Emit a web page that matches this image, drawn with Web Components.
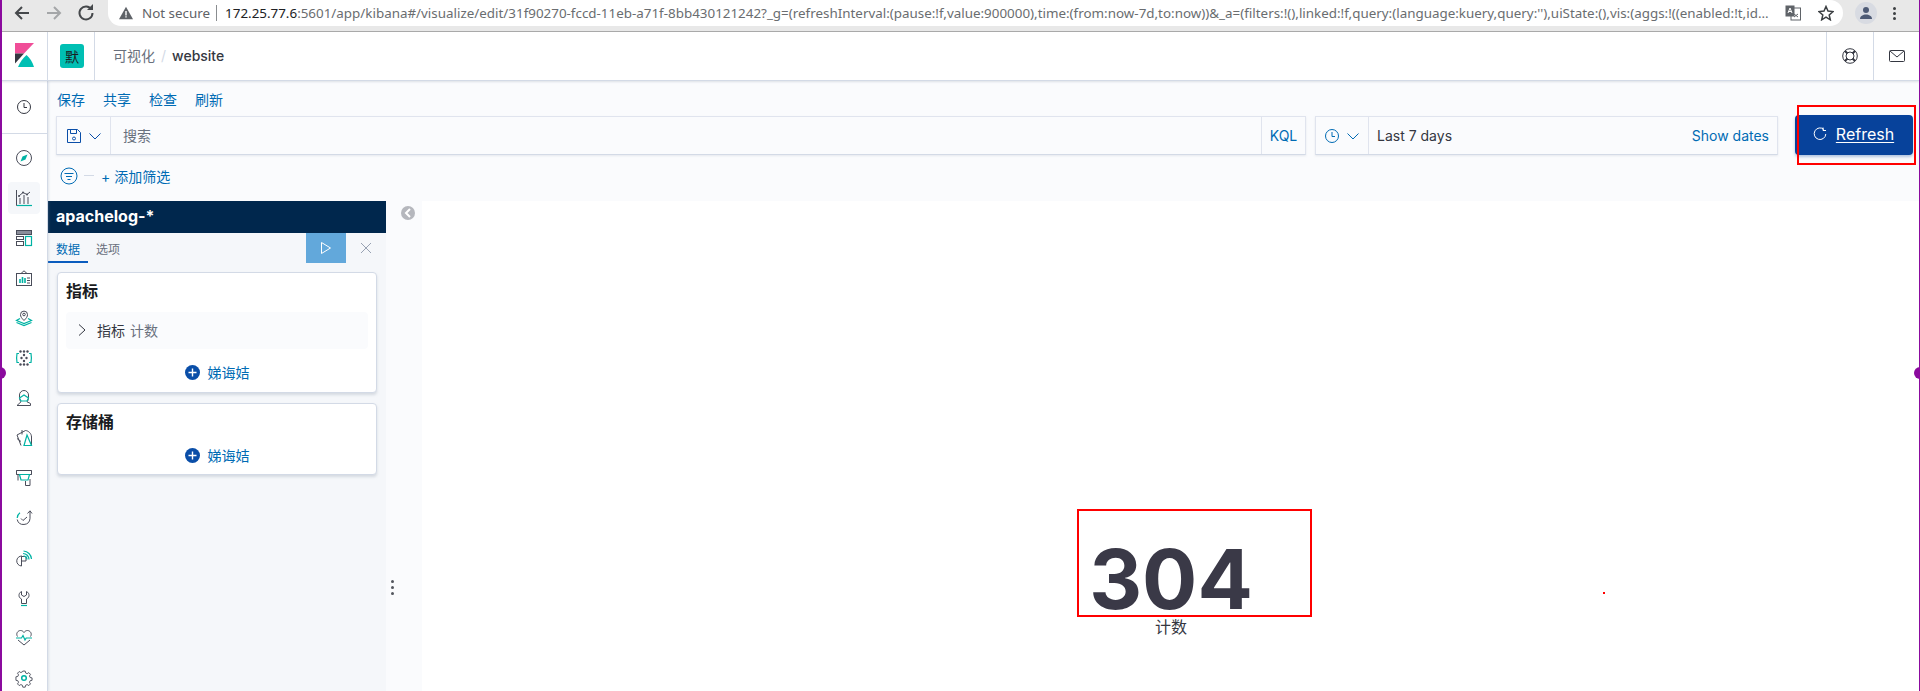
<!DOCTYPE html>
<html lang="zh">
<head>
<meta charset="utf-8">
<title>website - Kibana</title>
<style>
  html, body { margin: 0; padding: 0; height: 100%; overflow: hidden; background: #fff; }
  body { font-family: Inter, "Noto Sans CJK SC", sans-serif; color: #343741; }
</style>
</head>
<body>
<kbn-app></kbn-app>
<script>
const CJK = 'Inter, "Noto Sans CJK SC", sans-serif';
const D = 'fill="none" stroke="#4a4d5a" stroke-width="1"';
const T = 'fill="none" stroke="#00b3a4" stroke-width="1.2"';

const NAV_ICONS = {
  clock: `<circle cx="8" cy="8" r="6.5" fill="none" stroke="#343741"/><path d="M8 4v4.5h3" fill="none" stroke="#343741"/>`,
  discover: `<circle cx="8" cy="8" r="7.5" ${D}/><path d="M11.5 4.5 9.5 9.5 4.5 11.5 6.5 6.5z" fill="#00b3a4"/>`,
  visualize: `<path d="M.5 0v15.5H16" ${D}/><path d="M1 15.5h15" ${T}/><path d="M3 6 7 2.5 11 4.5 14 2" ${D}/><path d="M4 8v6M8 5v9M12 7v7" ${D}/><circle cx="3" cy="6" r="1" fill="#4a4d5a"/><circle cx="7" cy="2.5" r="1" fill="#4a4d5a"/><circle cx="11" cy="4.5" r="1" fill="#4a4d5a"/>`,
  dashboard: `<rect x=".5" y=".5" width="15" height="4" fill="#8a8d99" stroke="#4a4d5a"/><rect x=".5" y="6.5" width="7" height="3" ${D}/><rect x=".5" y="11.5" width="7" height="4" ${D}/><rect x="9.5" y="6.5" width="6" height="9" ${T}/>`,
  canvas: `<rect x=".5" y="3.5" width="15" height="12" ${D}/><path d="M5 3.5 8 .8l3 2.7" ${D}/><path d="M4 13V9M6.5 13V7M9 13V8" stroke="#00b3a4" stroke-width="1.6"/><path d="M11 8h3M11 10.5h3M11 13h3" ${D}/>`,
  maps: `<path d="M8 10.5C5.5 8 4.5 6.6 4.5 4.6a3.5 3.5 0 0 1 7 0C11.500 6.600 10.500 8 8 10.500z" ${D}/><circle cx="8" cy="4.500" r="1.300" ${D}/><path d="M4 8.500.5 10.500 8 13.500l7.500-3L12 8.500M.5 12.500 8 15.500l7.500-3" ${T}/>`,
  ml: `<g fill="#4a4d5a"><circle cx="4.500" cy="1.500" r="1.200"/><circle cx="8" cy="1.500" r="1.200"/><circle cx="11.500" cy="1.500" r="1.200"/><circle cx="5.500" cy="8" r="1.200"/><circle cx="10.500" cy="8" r="1.200"/><circle cx="8" cy="5" r="1.200"/><circle cx="8" cy="11" r="1.200"/><circle cx="4.500" cy="14.500" r="1.200"/><circle cx="8" cy="14.500" r="1.200"/><circle cx="11.500" cy="14.500" r="1.200"/></g><path d="M3 3.500H1L.6 8 1 12.500h2M13 3.500h2l.4 4.500-.4 4.500h-2" ${T}/>`,
  infra: `<path d="M1 15.500 5 11.800C3.800 10.500 3.500 9 3.500 7.500V5a4.500 4.500 0 0 1 9 0v2.500c0 1.500-.3 3-1.500 4.300l3.500 1.700v2H1z" ${D}/><path d="M3.500 8 8 5l4.500 3L11 11H5z" ${T}/>`,
  logs: `<path d="M15.500 15.500V7C15.500 3.500 12.500.8 9.500.5L1 5l4 10.500" ${D}/><path d="M6 4.500V0M1 8.500l4 3" ${D}/><path d="M8 15.500 11 5l4.500 10.500z" ${T}/>`,
  apm: `<path d="M.5 .5h15v4H.5zM2 4.500v6M14 9v6.500H9.500V11" ${D}/><path d="M3.500 4.500h10L12 10H5z" ${T}/><path d="M.5 .5v4M15.500 .5v4" ${D}/>`,
  uptime: `<path d="M4 2.800A6.800 6.800 0 0 0 1.200 8" ${T}/><path d="M1.200 9.500a6.500 6.500 0 0 0 12.800-1V1M11.500 3.500 14 .8l2 2.700" ${D}/><path d="M5 8.500l2 2 4-3.500" ${D}/>`,
  siem: `<path d="M9 6.500H5.500V16A5 5 0 1 1 6 6M5.500 11H10V6.500" ${D}/><path d="M7 3.500a6 6 0 0 1 6 6M7.500 1a8.500 8.500 0 0 1 8 8M7.500 6a3.500 3.500 0 0 1 3.500 3.500" ${T}/>`,
  dev: `<path d="M5.500 1.500C3.500 2.500 3 4 3 5.500c0 2 1.500 3 2.500 3.500v4.500h5V9c1-.5 2.500-1.500 2.500-3.500 0-1.500-.5-3-2.500-4V5L8 6.500 5.500 5z" ${D}/><path d="M5 15.500h6" ${T}/>`,
  monitoring: `<path d="M8 15 2 10M14 10l-6 5M1.500 6.500C-.500 3.500 2 .5 4.500 .5 6 .5 7.200 1.300 8 2.500 8.800 1.300 10 .5 11.500 .5 14 .5 16.500 3.500 14.500 6.500" ${D}/><path d="M0 8h5.500l1.500-2.500 2 4.500 1.200-2H16" ${T}/>`,
  management: `<path d="M6.700.5h2.600l.4 2 1.700.8 1.800-1.100 1.800 1.800-1.100 1.800.8 1.700 2 .4v2.600l-2 .4-.8 1.700 1.100 1.800-1.800 1.800-1.800-1.100-1.700.8-.4 2H6.700l-.4-2-1.700-.8-1.800 1.100-1.800-1.800 1.100-1.800-.8-1.700-2-.4V6.700l2-.4.8-1.700-1.100-1.800 1.800-1.800 1.800 1.100 1.700-.8z" transform="translate(.6 .6) scale(.925)" ${D}/><circle cx="8" cy="8" r="2.300" fill="none" stroke="#00b3a4" stroke-width="1.500"/>`
};

class KbnNavIcon extends HTMLElement {
  connectedCallback() {
    const name = this.getAttribute("name");
    const root = this.attachShadow({ mode: "open" });
    root.innerHTML = `
      <style>
        :host { display: flex; align-items: center; justify-content: center; width: 32px; height: 32px; flex: none; border-radius: 4px; }
        :host([active]) { background: #f5f7fa; }
        svg { width: 16px; height: 16px; display: block; overflow: visible; }
      </style>
      <svg viewBox="0 0 16 16">${NAV_ICONS[name]}</svg>`;
  }
}
customElements.define("kbn-nav-icon", KbnNavIcon);

class KbnNav extends HTMLElement {
  constructor() {
    super();
    const names = ["discover", "visualize", "dashboard", "canvas", "maps", "ml", "infra", "logs", "apm", "uptime", "siem", "dev", "monitoring", "management"];
    this.attachShadow({ mode: "open" }).innerHTML = `
      <style>
        :host { display: block; width: 48px; box-sizing: border-box; flex: none; background: #fff; border-right: 1px solid #d3dae6; box-shadow: 1px 0 2px rgba(152,162,179,.25); z-index: 2; overflow: hidden; }
        .recent { height: 52px; border-bottom: 1px solid #d3dae6; display: flex; align-items: center; justify-content: center; padding-left: 1px; }
        .recent svg { width: 16px; height: 16px; }
        .list { padding: 8px 0 0 8px; display: flex; flex-direction: column; gap: 8px; }
      </style>
      <div class="recent"><svg viewBox="0 0 16 16">${NAV_ICONS.clock}</svg></div>
      <div class="list">
        ${names.map(n => `<kbn-nav-icon name="${n}"${n == "visualize" ? " active" : ""}></kbn-nav-icon>`).join("")}
      </div>`;
  }
}
customElements.define("kbn-nav", KbnNav);

class BrowserBar extends HTMLElement {
  constructor() {
    super();
    this.attachShadow({ mode: "open" }).innerHTML = `
      <style>
        :host { display: flex; height: 31px; flex: none; background: #e8e8e8; border-bottom: 1px solid #a9a9a9; font: 13.400px "Noto Sans", sans-serif; color: #5f6368; }
        .nav { display: flex; width: 108px; flex: none; padding: 0 0 5px 13px; box-sizing: border-box; align-items: center; gap: 14px; }
        .nav svg { width: 18px; height: 18px; flex: none; }
        .omni { width: 1735px; flex: none; height: 26px; background: #fff; border-radius: 0 13px 13px 13px; display: flex; align-items: center; padding: 0 9px 0 11px; box-sizing: border-box; white-space: nowrap; }
        .warn { width: 14px; height: 14px; flex: none; margin-right: 9px; }
        .sep { width: 1px; height: 16px; background: #8a8d90; margin: 0 8px 0 6px; flex: none; }
        .url { flex: 1; min-width: 0; color: #6a6d70; }
        .url b { font-weight: 400; color: #202124; }
        .tr { margin-left: 15px; width: 16px; height: 16px; flex: none; }
        .star { margin-left: 17px; width: 16px; height: 16px; flex: none; }
        .right { flex: 1; display: flex; align-items: center; padding-bottom: 5px; }
        .avatar { width: 22px; height: 22px; border-radius: 50%; background: #d8dbe2; margin-left: 12px; display: flex; align-items: center; justify-content: center; }
        .kebab { margin-left: 16px; display: flex; flex-direction: column; gap: 2px; }
        .kebab i { width: 3px; height: 3px; border-radius: 50%; background: #3c4043; display: block; }
      </style>
      <div class="nav">
        <svg viewBox="0 0 18 18"><path d="M16 9H3.500M9 3 3 9l6 6" fill="none" stroke="#45484b" stroke-width="2"/></svg>
        <svg viewBox="0 0 18 18"><path d="M2 9h12.500M9 3l6 6-6 6" fill="none" stroke="#a4a6a8" stroke-width="2"/></svg>
        <svg viewBox="0 0 18 18"><path d="M14.500 5.500A6.500 6.500 0 1 0 15.500 9" fill="none" stroke="#45484b" stroke-width="2"/><path d="M10 6h6V0z" fill="#45484b"/></svg>
      </div>
      <div class="omni">
        <svg class="warn" viewBox="0 0 14 14"><path d="M7 .8 14 13.200H0z" fill="#5f6368"/><path d="M6.300 5h1.400v4.400H6.300zM6.300 10.200h1.400v1.400H6.300z" fill="#fff"/></svg>
        <span class="sec">Not secure</span><span class="sep"></span>
        <span class="url"><b>172.25.77.6</b>:5601/app/kibana#/visualize/edit/31f90270-fccd-11eb-a71f-8bb430121242?_g=(refreshInterval:(pause:!f,value:900000),time:(from:now-7d,to:now))&amp;_a=(filters:!(),linked:!f,query:(language:kuery,query:''),uiState:(),vis:(aggs:!((enabled:!t,id...</span>
        <svg class="tr" viewBox="0 0 16 16"><rect x="6" y="3" width="9.500" height="12" fill="#fff" stroke="#5f6368"/><rect x=".5" y=".5" width="9" height="11" fill="#5f6368"/><path d="M3 8l2-5 2 5M3.800 6.500h2.400" fill="none" stroke="#fff"/><path d="M9 9l4 3M13 9l-4 3" stroke="#5f6368"/></svg>
        <svg class="star" viewBox="0 0 16 16"><path d="M8 1.500l2 4.600 5 .5-3.800 3.300 1.100 4.900L8 12.200l-4.300 2.600 1.100-4.900L1 6.600l5-.5z" fill="none" stroke="#3c4043" stroke-width="1.500"/></svg>
      </div>
      <div class="right">
        <span class="avatar"><svg width="14" height="14" viewBox="0 0 14 14"><circle cx="7" cy="4" r="3" fill="#4d5a75"/><path d="M1 13c0-3 3-4.500 6-4.500s6 1.500 6 4.500z" fill="#4d5a75"/></svg></span>
        <span class="kebab"><i></i><i></i><i></i></span>
      </div>`;
  }
}
customElements.define("browser-bar", BrowserBar);

class KbnHeader extends HTMLElement {
  constructor() {
    super();
    this.attachShadow({ mode: "open" }).innerHTML = `
      <style>
        :host { display: flex; align-items: stretch; height: 48px; flex: none; background: #fff; border-bottom: 1px solid #d3dae6; box-shadow: 0 2px 2px -1px rgba(152,162,179,.3); z-index: 3; font-family: ${CJK}; }
        .logo { width: 48px; flex: none; display: flex; padding: 11px 0 0 15px; box-sizing: border-box; border-right: 1px solid #d3dae6; }
        .space { width: 47px; flex: none; border-right: 1px solid #d3dae6; padding: 12px 0 0 12px; box-sizing: border-box; }
        .badge { width: 24px; height: 24px; border-radius: 3px; background: #00bfb3; color: #1a1c21; font-size: 14px; display: flex; align-items: center; justify-content: center; }
        .crumbs { flex: 1; display: flex; align-items: center; padding: 0 0 2px 18px; font-size: 14px; color: #69707d; }
        .crumbs i { font-style: normal; color: #d3dae6; margin: 0 6px; }
        .crumbs b { font-weight: 500; color: #343741; }
        .act { width: 47px; flex: none; border-left: 1px solid #d3dae6; display: flex; justify-content: center; padding-top: 16px; box-sizing: border-box; }
        .act svg { width: 16px; height: 16px; }
      </style>
      <div class="logo"><svg width="19" height="24" viewBox="0 0 19 24"><path d="M0 0h19L9 10.500H0z" fill="#f04e98"/><path d="M0 10.500h9L0 20.500z" fill="#343741"/><path d="M3 24C5 19 8 15 11.500 12 15 15 17.500 19 19 24z" fill="#00bfb3"/></svg></div>
      <div class="space"><span class="badge">默</span></div>
      <div class="crumbs"><span>可视化</span><i>/</i><b>website</b></div>
      <div class="act"><svg viewBox="0 0 16 16"><circle cx="8" cy="8" r="7.300" fill="none" stroke="#343741"/><circle cx="8" cy="8" r="4" fill="none" stroke="#343741"/><path d="M3 3l2.500 2.500M13 3l-2.500 2.500M3 13l2.500-2.500M13 13l-2.500-2.500" stroke="#343741" stroke-width="2"/></svg></div>
      <div class="act"><svg viewBox="0 0 16 16"><rect x=".5" y="2.500" width="15" height="11" rx="1" fill="none" stroke="#343741"/><path d="M1 3l7 6 7-6" fill="none" stroke="#343741"/></svg></div>`;
  }
}
customElements.define("kbn-header", KbnHeader);

class KbnQueryBar extends HTMLElement {
  constructor() {
    super();
    this.attachShadow({ mode: "open" }).innerHTML = `
      <style>
        :host { display: block; flex: none; height: 120px; box-sizing: border-box; background: #fafbfd; font: 14px ${CJK}; color: #343741; }
        .links { height: 34px; display: flex; gap: 18px; padding-left: 9px; align-items: flex-end; color: #006bb4; }
        .links span { line-height: 28px; display: block; margin-bottom: 1px; }
        .row { display: flex; height: 40px; padding-left: 8px; align-items: flex-start; }
        .box { display: flex; height: 39px; margin-top: 1px; padding-bottom: 1px; box-sizing: border-box; border: 1px solid #e0e4ee; border-bottom-color: #d3dae6; box-shadow: 0 1px 2px rgba(152,162,179,.2); background: #fafbfd; align-items: center; }
        .query { width: 1250px; }
        .date { width: 463px; margin-left: 9px; }
        .pre { display: flex; align-items: center; justify-content: center; gap: 6px; height: 37px; margin-bottom: -1px; border-right: 1px solid #e0e4ee; box-sizing: border-box; flex: none; }
        .query .pre { width: 54px; }
        .date .pre { width: 53px; }
        .grow { flex: 1; padding-left: 12px; }
        .ph { color: #69707d; }
        .kql { width: 44px; flex: none; height: 37px; margin-bottom: -1px; padding-bottom: 1px; border-left: 1px solid #e0e4ee; display: flex; align-items: center; justify-content: center; color: #006bb4; box-sizing: border-box; }
        .link { color: #006bb4; padding-right: 8px; }
        .chev { width: 14px; height: 14px; }
        .btn { width: 118px; height: 40px; margin-left: 16.500px; padding-bottom: 2px; box-sizing: border-box; border-radius: 4px; background: #07429b; color: #fff; display: flex; align-items: center; justify-content: center; gap: 9px; box-shadow: 0 2px 3px rgba(7,66,155,.3); font-size: 16px; }
        .btn u { text-underline-offset: 2px; }
        .filter { display: flex; align-items: center; height: 46px; padding: 0 0 5px 11px; box-sizing: border-box; color: #006bb4; }
        .dash { width: 10px; height: 1px; background: #d3dae6; margin: 0 7px 0 6px; }
      </style>
      <div class="links"><span>保存</span><span>共享</span><span>检查</span><span>刷新</span></div>
      <div class="row">
        <div class="box query">
          <div class="pre">
            <svg width="16" height="16" viewBox="0 0 16 16"><path d="M1.500 1.500h10l3 3v10h-13zM4.500 1.500v4h6v-4" fill="none" stroke="#0a4ea8"/><circle cx="8" cy="10.500" r="1.500" fill="none" stroke="#0a4ea8"/></svg>
            <svg class="chev" viewBox="0 0 14 14"><path d="M1.500 4.500 7 10l5.500-5.500" fill="none" stroke="#0a4ea8"/></svg>
          </div>
          <div class="grow ph">搜索</div>
          <div class="kql">KQL</div>
        </div>
        <div class="box date">
          <div class="pre">
            <svg width="16" height="16" viewBox="0 0 16 16"><circle cx="8" cy="8" r="6.500" fill="none" stroke="#006bb4"/><path d="M8 4v4.500h3" fill="none" stroke="#006bb4"/></svg>
            <svg class="chev" viewBox="0 0 14 14"><path d="M1.500 4.500 7 10l5.500-5.500" fill="none" stroke="#006bb4"/></svg>
          </div>
          <div class="grow" style="padding-left:8px">Last 7 days</div>
          <div class="link">Show dates</div>
        </div>
        <div class="btn">
          <svg width="14" height="14" viewBox="0 0 14 14"><path d="M11 2.500A5.800 5.800 0 1 0 12.800 7" fill="none" stroke="#fff"/><path d="M10 .5v3h3" fill="none" stroke="#fff"/></svg>
          <u>Refresh</u>
        </div>
      </div>
      <div class="filter" style="padding-left:12px">
        <svg width="18" height="18" viewBox="0 0 18 18"><circle cx="9" cy="9" r="8" fill="none" stroke="#006bb4"/><path d="M4.500 6.500h9M6 9.500h6M7.500 12.500h3" stroke="#006bb4"/></svg>
        <span class="dash"></span>
        <span>+ 添加筛选</span>
      </div>`;
  }
}
customElements.define("kbn-query-bar", KbnQueryBar);

class AggCard extends HTMLElement {
  constructor() {
    super();
    this.attachShadow({ mode: "open" }).innerHTML = `
      <style>
        :host { display: block; background: #fff; border: 1px solid #d3dae6; border-radius: 4px; box-shadow: 0 2px 3px rgba(152,162,179,.35); padding: 8px; box-sizing: border-box; }
        h3 { margin: 0; font: 700 16px/20px ${CJK}; color: #1a1c21; }
        .add { display: flex; align-items: center; justify-content: center; gap: 8px; height: 24px; margin-top: 11px; font-size: 14px; color: #006bb4; }
        svg { display: block; }
      </style>
      <h3>${this.getAttribute("title")}</h3>
      <slot></slot>
      <div class="add">
        <svg width="15" height="15" viewBox="0 0 15 15"><circle cx="7.500" cy="7.500" r="7.500" fill="#0a4ea8"/><path d="M7.500 3.500v8M3.500 7.500h8" stroke="#fff" stroke-width="1.400"/></svg>
        <span>娣诲姞</span>
      </div>`;
  }
}
customElements.define("agg-card", AggCard);

class AggRow extends HTMLElement {
  constructor() {
    super();
    this.attachShadow({ mode: "open" }).innerHTML = `
      <style>
        :host { display: flex; align-items: center; height: 37px; margin: 11px 0 0; padding: 0 0 2px 11px; box-sizing: border-box; background: #fafbfd; border-radius: 4px; font-size: 14px; color: #343741; gap: 10px; }
        span { color: #69707d; margin-left: 5px; }
      </style>
      <svg width="10" height="14" viewBox="0 0 10 14"><path d="M2 1.500 8 7l-6 5.500" fill="none" stroke="#343741"/></svg>
      <div>指标<span>计数</span></div>`;
  }
}
customElements.define("agg-row", AggRow);

class VisSidebar extends HTMLElement {
  constructor() {
    super();
    this.attachShadow({ mode: "open" }).innerHTML = `
      <style>
        :host { display: block; width: 338px; flex: none; background: #f5f7fa; font-family: ${CJK}; }
        .title { height: 32px; background: #00274d; color: #fff; font: 700 16px/30px ${CJK}; padding-left: 8px; }
        .tabs { display: flex; height: 30px; font-size: 12px; }
        .tab { width: 40px; display: flex; align-items: center; justify-content: center; box-sizing: border-box; height: 30px; color: #69707d; }
        .tab.on { color: #006bb4; border-bottom: 2px solid #0a5cbe; padding-top: 2px; }
        .play { width: 40px; height: 30px; margin-left: auto; background: #62a8db; display: flex; align-items: center; justify-content: center; }
        .close { width: 40px; display: flex; align-items: center; justify-content: center; }
        .cards { padding: 9px 9px 0 9px; display: flex; flex-direction: column; gap: 10px; }
      </style>
      <div class="title">apachelog-*</div>
      <div class="tabs">
        <div class="tab on">数据</div><div class="tab">选项</div>
        <div class="play"><svg width="12" height="14" viewBox="0 0 12 14"><path d="M1.500 1.500v11l9-5.500z" fill="none" stroke="#fff"/></svg></div>
        <div class="close"><svg width="12" height="12" viewBox="0 0 12 12"><path d="M1 1l10 10M11 1 1 11" stroke="#98a2b3"/></svg></div>
      </div>
      <div class="cards"><slot></slot></div>`;
  }
}
customElements.define("vis-sidebar", VisSidebar);

class VisGutter extends HTMLElement {
  constructor() {
    super();
    this.attachShadow({ mode: "open" }).innerHTML = `
      <style>
        :host { display: flex; flex-direction: column; width: 36px; flex: none; background: #fafbfd; }
        .toggle { margin: 5px 0 0 15px; width: 14px; height: 14px; border-radius: 50%; background: #b5b7bd; display: flex; align-items: center; justify-content: center; }
        .dots { margin: 360px 0 0 5px; display: flex; flex-direction: column; gap: 3px; }
        .dots i { width: 3px; height: 3px; border-radius: 50%; background: #53565e; display: block; }
      </style>
      <div class="toggle"><svg width="8" height="10" viewBox="0 0 8 10"><path d="M6 1 2 5l4 4" fill="none" stroke="#fff" stroke-width="2"/></svg></div>
      <div class="dots"><i></i><i></i><i></i></div>`;
  }
}
customElements.define("vis-gutter", VisGutter);

class MetricVis extends HTMLElement {
  constructor() {
    super();
    this.attachShadow({ mode: "open" }).innerHTML = `
      <style>
        :host { display: flex; flex: 1; flex-direction: column; align-items: center; background: #fff; padding-top: 331px; box-sizing: border-box; color: #343741; }
        .val { font: 700 82px/96px Inter, sans-serif; color: #3a3947; }
        .label { font: 16px/20px ${CJK}; margin-top: -11px; }
      </style>
      <div class="val">${this.getAttribute("value")}</div>
      <div class="label">${this.getAttribute("label")}</div>`;
  }
}
customElements.define("metric-vis", MetricVis);

// red boxes and purple dots that were painted over the screenshot
class PageMarks extends HTMLElement {
  constructor() {
    super();
    this.attachShadow({ mode: "open" }).innerHTML = `
      <style>
        :host { position: absolute; inset: 0; pointer-events: none; z-index: 10; }
        div { position: absolute; box-sizing: border-box; }
        .line { top: 0; bottom: 0; width: 1.500px; background: #8b0a9e; }
        .dot { width: 12px; height: 12px; border-radius: 50%; background: #8b0a9e; top: 367px; }
        .red { border: 2px solid #f00; }
      </style>
      <div class="line" style="left:0"></div>
      <div class="line" style="right:0"></div>
      <div class="dot" style="left:-6px"></div>
      <div class="dot" style="right:-6px"></div>
      <div class="red" style="left:1797px;top:105px;width:119px;height:60px"></div>
      <div class="red" style="left:1077px;top:509px;width:235px;height:108px"></div>
      <div style="left:1603px;top:592px;width:2px;height:2px;background:#f00"></div>`;
  }
}
customElements.define("page-marks", PageMarks);

class KbnApp extends HTMLElement {
  constructor() {
    super();
    this.attachShadow({ mode: "open" }).innerHTML = `
      <style>
        :host { display: flex; flex-direction: column; width: 1920px; height: 691px; overflow: hidden; position: relative; }
        .body { display: flex; flex: 1; min-height: 0; }
        .main { flex: 1; display: flex; flex-direction: column; min-width: 0; }
        .editor { flex: 1; display: flex; min-height: 0; }
      </style>
      <browser-bar></browser-bar>
      <kbn-header></kbn-header>
      <div class="body">
        <kbn-nav></kbn-nav>
        <div class="main">
          <kbn-query-bar></kbn-query-bar>
          <div class="editor">
            <vis-sidebar>
              <agg-card title="指标" style="height:121px"><agg-row></agg-row></agg-card>
              <agg-card title="存储桶" style="height:72px"></agg-card>
            </vis-sidebar>
            <vis-gutter></vis-gutter>
            <metric-vis value="304" label="计数"></metric-vis>
          </div>
        </div>
      </div>
      <page-marks></page-marks>`;
  }
}
customElements.define("kbn-app", KbnApp);
</script>
</body>
</html>
